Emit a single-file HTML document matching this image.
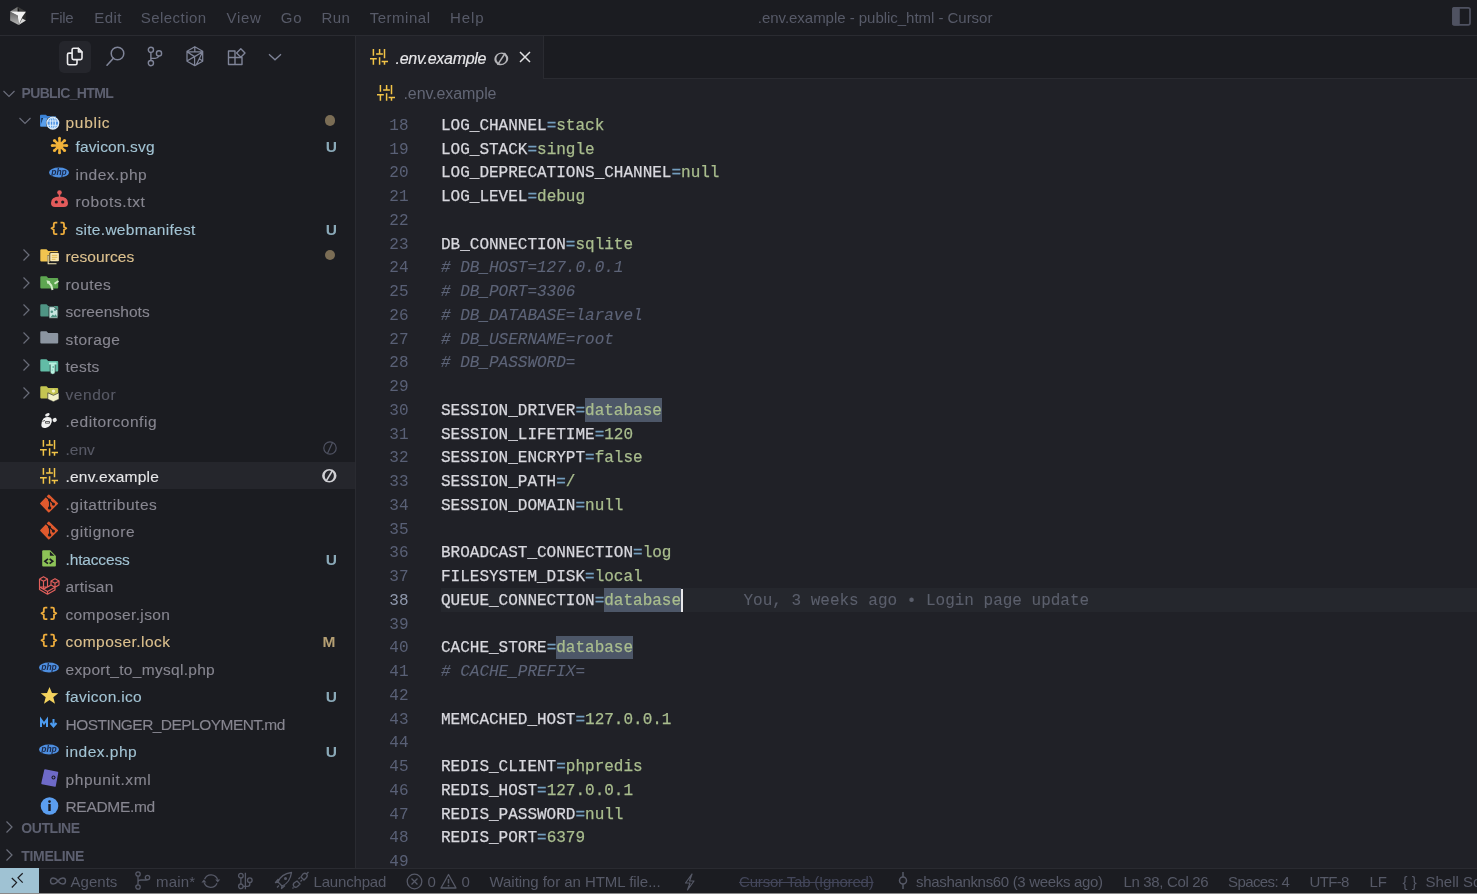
<!DOCTYPE html>
<html><head><meta charset="utf-8"><style>
html,body{margin:0;padding:0;width:1477px;height:894px;overflow:hidden;background:#1b1c21;}
.t{position:absolute;white-space:pre;line-height:normal;}
.m{position:absolute;white-space:pre;line-height:normal;font-family:"Liberation Mono",monospace;font-size:16px;color:#d8d8de;-webkit-text-stroke:0.25px currentColor;}
svg{overflow:visible}
</style></head><body>
<div style="position:absolute;left:0;top:0;width:1477px;height:894px;will-change:transform">
<div style="position:absolute;left:0px;top:0px;width:1477px;height:35px;background:#1b1c21;"></div>
<div style="position:absolute;left:0px;top:35px;width:1477px;height:1px;background:#2a2b31;"></div>
<svg style="position:absolute;left:5px;top:3px" width="26" height="26" viewBox="0 0 26 26"><path d="M5.1 8.4 L12.8 12.5 L13.7 22.1 L5.1 17.4 Z" fill="url(#lf)"/>
<defs><linearGradient id="lf" x1="0" y1="0" x2="0" y2="1"><stop offset="0" stop-color="#5e5e5e"/><stop offset="1" stop-color="#b8b8b8"/></linearGradient></defs>
<path d="M12.8 12.5 L20.9 8.6 L20.9 17.4 L13.7 22.1 Z" fill="#2c2c2c"/>
<path d="M13.7 22.1 L20.9 17.4 L17.3 15.5 Z" fill="#d8d8d8"/>
<path d="M12.8 3.8 L5.1 8.4 L12.8 12.5 Z" fill="#7c7c7c"/>
<path d="M12.8 3.8 L20.9 8.6 L12.8 12.5 Z" fill="#3a3a3a"/>
<path d="M12.8 3.8 L14.5 8.6 L12.8 9 Z" fill="#111"/>
<path d="M5.2 8.4 L20.9 8.7 L17.4 13.7 L13.7 22.1 L12.8 12.5 Z" fill="#f2f2f2"/></svg>
<div class="t" style="left:50.3px;top:9.42px;font-size:15px;color:#575a68;font-family:'Liberation Sans';font-weight:normal;font-style:normal;letter-spacing:-0.290px;">File</div>
<div class="t" style="left:94.3px;top:9.42px;font-size:15px;color:#575a68;font-family:'Liberation Sans';font-weight:normal;font-style:normal;letter-spacing:0.451px;">Edit</div>
<div class="t" style="left:140.8px;top:9.42px;font-size:15px;color:#575a68;font-family:'Liberation Sans';font-weight:normal;font-style:normal;letter-spacing:0.449px;">Selection</div>
<div class="t" style="left:226.5px;top:9.42px;font-size:15px;color:#575a68;font-family:'Liberation Sans';font-weight:normal;font-style:normal;letter-spacing:0.686px;">View</div>
<div class="t" style="left:280.8px;top:9.42px;font-size:15px;color:#575a68;font-family:'Liberation Sans';font-weight:normal;font-style:normal;letter-spacing:0.690px;">Go</div>
<div class="t" style="left:321.4px;top:9.42px;font-size:15px;color:#575a68;font-family:'Liberation Sans';font-weight:normal;font-style:normal;letter-spacing:0.441px;">Run</div>
<div class="t" style="left:369.7px;top:9.42px;font-size:15px;color:#575a68;font-family:'Liberation Sans';font-weight:normal;font-style:normal;letter-spacing:0.517px;">Terminal</div>
<div class="t" style="left:450.0px;top:9.42px;font-size:15px;color:#575a68;font-family:'Liberation Sans';font-weight:normal;font-style:normal;letter-spacing:0.883px;">Help</div>
<div class="t" style="left:757.8px;top:9.42px;font-size:15px;color:#575a68;font-family:'Liberation Sans';font-weight:normal;font-style:normal;letter-spacing:-0.031px;">.env.example - public_html - Cursor</div>
<svg style="position:absolute;left:1451px;top:6px" width="20" height="20" viewBox="0 0 20 20"><rect x="2" y="1.8" width="17" height="17" rx="1.8" fill="none" stroke="#4f5261" stroke-width="1.7"/><rect x="1.2" y="1" width="7.6" height="18.6" rx="1.6" fill="#4f5261"/></svg>
<div style="position:absolute;left:0px;top:36px;width:355px;height:832px;background:#1b1c21;"></div>
<div style="position:absolute;left:355px;top:36px;width:1px;height:832px;background:#2a2b31;"></div>
<div style="position:absolute;left:59px;top:41px;width:32px;height:32px;background:#25262c;border-radius:5px;"></div>
<svg style="position:absolute;left:62px;top:44px" width="26" height="26" viewBox="0 0 26 26"><path d="M11.6 4.3 H16.3 L20 8 V14.1 Q20 15.6 18.5 15.6 H11.6 Q10.1 15.6 10.1 14.1 V5.8 Q10.1 4.3 11.6 4.3 Z" fill="none" stroke="#ececee" stroke-width="1.6" stroke-linejoin="round"/>
<path d="M16.3 4.3 V8 H20 Z" fill="#b8b8bc" stroke="#ececee" stroke-width="1.3" stroke-linejoin="round"/>
<path d="M10.1 9.1 H7 Q5.5 9.1 5.5 10.6 V19.2 Q5.5 20.7 7 20.7 H13.5 Q15 20.7 15 19.2 V15.6" fill="none" stroke="#ececee" stroke-width="1.6" stroke-linejoin="round"/></svg>
<svg style="position:absolute;left:106px;top:47px" width="19" height="19" viewBox="0 0 19 19"><circle cx="11.5" cy="6.5" r="6.3" fill="none" stroke="#7f8498" stroke-width="1.5"/><path d="M7.4 11.2 L1 18.2" stroke="#7f8498" stroke-width="1.6" stroke-linecap="round"/></svg>
<svg style="position:absolute;left:146px;top:46px" width="17" height="21" viewBox="0 0 17 21"><circle cx="4.9" cy="3.8" r="2.6" fill="none" stroke="#7f8498" stroke-width="1.4"/><circle cx="4.9" cy="17.1" r="2.6" fill="none" stroke="#7f8498" stroke-width="1.4"/><circle cx="13" cy="7.4" r="2.6" fill="none" stroke="#7f8498" stroke-width="1.4"/><path d="M4.9 6.4 V14.5 M4.9 12.4 H9.3 Q11.8 12.4 12.9 10" fill="none" stroke="#7f8498" stroke-width="1.4"/></svg>
<svg style="position:absolute;left:183px;top:44px" width="24" height="24" viewBox="0 0 24 24"><path d="M11.8 2.7 L19.7 7.3 V17.2 L11.8 21.6 L4 17.2 V7.3 Z M4.3 7.8 H19.4 M11.8 2.7 V7.8 M4.3 8 L11.6 12.6 L19.4 8 M11.6 12.6 L4.3 16.8 M11.6 12.6 V21.5 M19.4 8.3 L13.4 20.7 M16.1 14.5 L19.6 17.1" fill="none" stroke="#7f8498" stroke-width="1.25" stroke-linejoin="round"/></svg>
<svg style="position:absolute;left:226.5px;top:47.6px" width="19" height="19" viewBox="0 0 19 19"><path d="M1.5 3 H8 V9.5 H1.5 Z M1.5 9.5 H8 V16.5 H1.5 Z M8 9.5 H15 V16.5 H8 Z" fill="none" stroke="#7f8498" stroke-width="1.4" stroke-linejoin="round"/><path d="M13.8 0.8 L18 5 L13.8 9.2 L9.6 5 Z" fill="none" stroke="#7f8498" stroke-width="1.4" stroke-linejoin="round"/></svg>
<svg style="position:absolute;left:268px;top:52px" width="14" height="9" viewBox="0 0 14 9"><path d="M1 2.3 L7 7.8 L13 2.3" fill="none" stroke="#7f8498" stroke-width="1.3"/></svg>
<svg style="position:absolute;left:1.5px;top:88.5px" width="14" height="10" viewBox="0 0 14 10"><path d="M1.5 2 L7 7.5 L12.5 2" fill="none" stroke="#6a6d7a" stroke-width="1.2"/></svg>
<div class="t" style="left:21.5px;top:84.83px;font-size:14px;color:#5d6070;font-family:'Liberation Sans';font-weight:bold;font-style:normal;letter-spacing:-0.657px;">PUBLIC_HTML</div>
<svg style="position:absolute;left:17.8px;top:116px" width="14" height="10" viewBox="0 0 14 10"><path d="M1.5 2 L7 7.5 L12.5 2" fill="none" stroke="#6a6d7a" stroke-width="1.2"/></svg>
<svg style="position:absolute;left:40px;top:113px" width="21" height="18" viewBox="0 0 21 18"><path d="M0 2.7 Q0 1.7 1 1.7 H5.8 L7.3 3 H15 Q16.2 3 16.2 4.2 V12.4 Q16.2 13.4 15.2 13.4 H1 Q0 13.4 0 12.4 Z" fill="#3b82d6"/>
<path d="M1.3 5 H3.2 L1.3 11 Z" fill="#16304f"/>
<path d="M3.3 5 H16.5 L14 13.4 H0.3 Z" fill="#5a9fea"/>
<defs><clipPath id="gc"><circle cx="12.8" cy="10.1" r="5.6"/></clipPath></defs>
<circle cx="12.8" cy="10.1" r="6.9" fill="#1b1c21"/>
<circle cx="12.8" cy="10.1" r="5.9" fill="#4a90e2" stroke="#d9ecfb" stroke-width="1.3"/>
<g clip-path="url(#gc)" stroke="#d9ecfb" stroke-width="1.1" fill="none"><ellipse cx="12.8" cy="10.1" rx="2.6" ry="6"/><path d="M6 8 H19.6 M6 12.2 H19.6 M12.8 4 V16"/></g></svg>
<div class="t" style="left:65.5px;top:113.57px;font-size:15.5px;color:#dcc08e;font-family:'Liberation Sans';font-weight:normal;font-style:normal;letter-spacing:0.720px;-webkit-text-stroke:0.12px currentColor;">public</div>
<div style="position:absolute;left:324.6px;top:115.3px;width:10.4px;height:10.4px;border-radius:50%;background:#7b6d55"></div>
<svg style="position:absolute;left:49.5px;top:135.5px" width="19" height="19" viewBox="0 0 19 19"><path d="M9.5 9.5 L16.70 9.50" stroke="#f2b33a" stroke-width="2.5"/><circle cx="16.70" cy="9.50" r="1.5" fill="#f2b33a"/><path d="M9.5 9.5 L14.59 14.59" stroke="#f2b33a" stroke-width="2.5"/><circle cx="14.59" cy="14.59" r="1.5" fill="#f2b33a"/><path d="M9.5 9.5 L9.50 16.70" stroke="#f2b33a" stroke-width="2.5"/><circle cx="9.50" cy="16.70" r="1.5" fill="#f2b33a"/><path d="M9.5 9.5 L4.41 14.59" stroke="#f2b33a" stroke-width="2.5"/><circle cx="4.41" cy="14.59" r="1.5" fill="#f2b33a"/><path d="M9.5 9.5 L2.30 9.50" stroke="#f2b33a" stroke-width="2.5"/><circle cx="2.30" cy="9.50" r="1.5" fill="#f2b33a"/><path d="M9.5 9.5 L4.41 4.41" stroke="#f2b33a" stroke-width="2.5"/><circle cx="4.41" cy="4.41" r="1.5" fill="#f2b33a"/><path d="M9.5 9.5 L9.50 2.30" stroke="#f2b33a" stroke-width="2.5"/><circle cx="9.50" cy="2.30" r="1.5" fill="#f2b33a"/><path d="M9.5 9.5 L14.59 4.41" stroke="#f2b33a" stroke-width="2.5"/><circle cx="14.59" cy="4.41" r="1.5" fill="#f2b33a"/><circle cx="9.5" cy="9.5" r="3.6" fill="#f2b33a"/></svg>
<div class="t" style="left:75.5px;top:138.07px;font-size:15.5px;color:#a2c3d3;font-family:'Liberation Sans';font-weight:normal;font-style:normal;letter-spacing:0.146px;-webkit-text-stroke:0.12px currentColor;">favicon.svg</div>
<div class="t" style="left:325.8px;top:138.27px;font-size:15.5px;color:#8aa9b8;font-family:'Liberation Sans';font-weight:bold;font-style:normal;">U</div>
<svg style="position:absolute;left:49.2px;top:166.7px" width="20" height="11" viewBox="0 0 20 11"><ellipse cx="10" cy="5.5" rx="10" ry="5" fill="#4d8ee0"/><text x="10" y="8" font-family="Liberation Sans" font-style="italic" font-weight="bold" font-size="8.5" text-anchor="middle" fill="#1b2a4a">php</text></svg>
<div class="t" style="left:75.5px;top:165.57px;font-size:15.5px;color:#878690;font-family:'Liberation Sans';font-weight:normal;font-style:normal;letter-spacing:0.485px;-webkit-text-stroke:0.12px currentColor;">index.php</div>
<svg style="position:absolute;left:50px;top:190.2px" width="19" height="18" viewBox="0 0 19 18"><circle cx="9.5" cy="2.6" r="2.3" fill="#e35b5b"/><rect x="8.8" y="3" width="1.4" height="4" fill="#e35b5b"/><path d="M1 13 Q1 6.5 9.5 6.5 Q18 6.5 18 13 Q18 17 14 17 H5 Q1 17 1 13 Z" fill="#e35b5b"/><circle cx="6.3" cy="12" r="1.6" fill="#1b1c21"/><circle cx="12.7" cy="12" r="1.6" fill="#1b1c21"/></svg>
<div class="t" style="left:75.5px;top:193.07px;font-size:15.5px;color:#878690;font-family:'Liberation Sans';font-weight:normal;font-style:normal;letter-spacing:0.628px;-webkit-text-stroke:0.12px currentColor;">robots.txt</div>
<svg style="position:absolute;left:50px;top:220.5px" width="18" height="15" viewBox="0 0 18 15"><path d="M7.3 1.6 H5.2 Q3.8 1.6 3.8 3 V5.9 L1.5 7.35 L3.8 8.8 V11.7 Q3.8 13.1 5.2 13.1 H7.3 M10.5 1.6 H12.6 Q14 1.6 14 3 V5.9 L16.3 7.35 L14 8.8 V11.7 Q14 13.1 12.6 13.1 H10.5" fill="none" stroke="#f0ae3c" stroke-width="1.8" stroke-linejoin="round"/></svg>
<div class="t" style="left:75.5px;top:220.57px;font-size:15.5px;color:#a2c3d3;font-family:'Liberation Sans';font-weight:normal;font-style:normal;letter-spacing:0.291px;-webkit-text-stroke:0.12px currentColor;">site.webmanifest</div>
<div class="t" style="left:325.8px;top:220.77px;font-size:15.5px;color:#8aa9b8;font-family:'Liberation Sans';font-weight:bold;font-style:normal;">U</div>
<svg style="position:absolute;left:20.7px;top:248.0px" width="10" height="14" viewBox="0 0 10 14"><path d="M2.5 1.5 L8 7 L2.5 12.5" fill="none" stroke="#6a6d7a" stroke-width="1.2"/></svg>
<svg style="position:absolute;left:40px;top:247.5px" width="19.5" height="17" viewBox="0 0 19.5 17"><path d="M0.3 2.3 Q0.3 1.3 1.3 1.3 H6.5 L8.2 2.9 H17.2 Q18.2 2.9 18.2 3.9 V12.5 Q18.2 13.5 17.2 13.5 H1.3 Q0.3 13.5 0.3 12.5 Z" fill="#f1c44f"/><rect x="9.5" y="4.2" width="10.1" height="9.8" rx="1" fill="#1b1c21"/><rect x="10.2" y="4.9" width="8.7" height="8.4" rx="0.8" fill="#f8e9b5"/><rect x="7.6" y="7" width="1.2" height="9.3" fill="#1b1c21"/><rect x="7.6" y="15.3" width="9.5" height="1.2" fill="#1b1c21"/><path d="M11.8 7.3 H17.3 M11.8 9.3 H17.3 M11.8 11.3 H15.5" stroke="#e0b84e" stroke-width="1"/><path d="M8.2 7.5 V15.8 H16.5" fill="none" stroke="#f8e9b5" stroke-width="1.1"/></svg>
<div class="t" style="left:65.5px;top:248.07px;font-size:15.5px;color:#dcc08e;font-family:'Liberation Sans';font-weight:normal;font-style:normal;letter-spacing:0.081px;-webkit-text-stroke:0.12px currentColor;">resources</div>
<div style="position:absolute;left:324.6px;top:249.8px;width:10.4px;height:10.4px;border-radius:50%;background:#7b6d55"></div>
<svg style="position:absolute;left:20.7px;top:275.5px" width="10" height="14" viewBox="0 0 10 14"><path d="M2.5 1.5 L8 7 L2.5 12.5" fill="none" stroke="#6a6d7a" stroke-width="1.2"/></svg>
<svg style="position:absolute;left:40px;top:275.0px" width="19.5" height="17" viewBox="0 0 19.5 17"><path d="M0.3 2.3 Q0.3 1.3 1.3 1.3 H6.5 L8.2 2.9 H17.2 Q18.2 2.9 18.2 3.9 V12.5 Q18.2 13.5 17.2 13.5 H1.3 Q0.3 13.5 0.3 12.5 Z" fill="#5ea651"/><path d="M12.5 15 L11.3 10.5 L8.3 7" fill="none" stroke="#d4ecc9" stroke-width="2"/><path d="M6.5 5.3 L10.3 6.2 L7.4 9 Z" fill="#d4ecc9"/><path d="M14.5 8.8 L18.5 6" stroke="#d4ecc9" stroke-width="2"/></svg>
<div class="t" style="left:65.5px;top:275.57px;font-size:15.5px;color:#878690;font-family:'Liberation Sans';font-weight:normal;font-style:normal;letter-spacing:0.444px;-webkit-text-stroke:0.12px currentColor;">routes</div>
<svg style="position:absolute;left:20.7px;top:303.0px" width="10" height="14" viewBox="0 0 10 14"><path d="M2.5 1.5 L8 7 L2.5 12.5" fill="none" stroke="#6a6d7a" stroke-width="1.2"/></svg>
<svg style="position:absolute;left:40px;top:302.5px" width="19.5" height="17" viewBox="0 0 19.5 17"><path d="M0.3 2.3 Q0.3 1.3 1.3 1.3 H6.5 L8.2 2.9 H17.2 Q18.2 2.9 18.2 3.9 V12.5 Q18.2 13.5 17.2 13.5 H1.3 Q0.3 13.5 0.3 12.5 Z" fill="#4f9484"/><path d="M9 3.7 H14 L17.9 7.6 V15.2 H9 Z" fill="#c8e6e0" stroke="#1b1c21" stroke-width="0.7"/><circle cx="11.8" cy="8.8" r="1.3" fill="#4f9484"/><circle cx="15" cy="6.8" r="1.1" fill="#4f9484"/><path d="M10.5 14.2 L12.8 11.5 L14.3 12.8 L15.8 11.3 L17.2 14.2 Z" fill="#4f9484"/></svg>
<div class="t" style="left:65.5px;top:303.07px;font-size:15.5px;color:#878690;font-family:'Liberation Sans';font-weight:normal;font-style:normal;letter-spacing:0.063px;-webkit-text-stroke:0.12px currentColor;">screenshots</div>
<svg style="position:absolute;left:20.7px;top:330.5px" width="10" height="14" viewBox="0 0 10 14"><path d="M2.5 1.5 L8 7 L2.5 12.5" fill="none" stroke="#6a6d7a" stroke-width="1.2"/></svg>
<svg style="position:absolute;left:40px;top:330.0px" width="19.5" height="17" viewBox="0 0 19.5 17"><path d="M0.3 2.3 Q0.3 1.3 1.3 1.3 H6.5 L8.2 2.9 H17.2 Q18.2 2.9 18.2 3.9 V12.5 Q18.2 13.5 17.2 13.5 H1.3 Q0.3 13.5 0.3 12.5 Z" fill="#8c95a1"/></svg>
<div class="t" style="left:65.5px;top:330.57px;font-size:15.5px;color:#878690;font-family:'Liberation Sans';font-weight:normal;font-style:normal;letter-spacing:0.450px;-webkit-text-stroke:0.12px currentColor;">storage</div>
<svg style="position:absolute;left:20.7px;top:358.0px" width="10" height="14" viewBox="0 0 10 14"><path d="M2.5 1.5 L8 7 L2.5 12.5" fill="none" stroke="#6a6d7a" stroke-width="1.2"/></svg>
<svg style="position:absolute;left:40px;top:357.5px" width="19.5" height="17" viewBox="0 0 19.5 17"><path d="M0.3 2.3 Q0.3 1.3 1.3 1.3 H6.5 L8.2 2.9 H17.2 Q18.2 2.9 18.2 3.9 V12.5 Q18.2 13.5 17.2 13.5 H1.3 Q0.3 13.5 0.3 12.5 Z" fill="#62bca6"/><path d="M10.2 5.6 H15.2 V14 Q15.2 16.3 12.7 16.3 Q10.2 16.3 10.2 14 Z" fill="#b8f2e0" stroke="#1b1c21" stroke-width="0.6"/><rect x="9" y="4.6" width="7.6" height="2" rx="0.6" fill="#b8f2e0"/><circle cx="13.2" cy="9" r="0.9" fill="#62bca6"/><circle cx="12.3" cy="12" r="0.6" fill="#62bca6"/></svg>
<div class="t" style="left:65.5px;top:358.07px;font-size:15.5px;color:#878690;font-family:'Liberation Sans';font-weight:normal;font-style:normal;letter-spacing:0.267px;-webkit-text-stroke:0.12px currentColor;">tests</div>
<svg style="position:absolute;left:20.7px;top:385.5px" width="10" height="14" viewBox="0 0 10 14"><path d="M2.5 1.5 L8 7 L2.5 12.5" fill="none" stroke="#6a6d7a" stroke-width="1.2"/></svg>
<svg style="position:absolute;left:40px;top:385.0px" width="19.5" height="17" viewBox="0 0 19.5 17"><path d="M0.3 2.3 Q0.3 1.3 1.3 1.3 H6.5 L8.2 2.9 H17.2 Q18.2 2.9 18.2 3.9 V12.5 Q18.2 13.5 17.2 13.5 H1.3 Q0.3 13.5 0.3 12.5 Z" fill="#c4c552"/><path d="M7.8 7.8 L13.4 10.3 L19 7.8 V14.2 L13.4 16.7 L7.8 14.2 Z" fill="#f3f2c8" stroke="#1b1c21" stroke-width="0.6"/><circle cx="13.4" cy="6.1" r="1.7" fill="#f3f2c8"/></svg>
<div class="t" style="left:65.5px;top:385.57px;font-size:15.5px;color:#585a66;font-family:'Liberation Sans';font-weight:normal;font-style:normal;letter-spacing:0.561px;-webkit-text-stroke:0.12px currentColor;">vendor</div>
<svg style="position:absolute;left:40px;top:411.5px" width="19" height="18" viewBox="0 0 19 18"><ellipse cx="7.4" cy="2.8" rx="2.4" ry="1.5" transform="rotate(-25 7.4 2.8)" fill="#ececec"/><path d="M3.5 6.5 Q7 4.3 10.5 5.5 Q12.5 7 11.5 10.5 Q10 15 5.5 16 Q1.5 16.5 1.3 13 Q1.2 9 3.5 6.5 Z" fill="#f2f2f2"/><ellipse cx="14.7" cy="8" rx="2.2" ry="2" transform="rotate(-30 14.7 8)" fill="#e8e8e8"/><path d="M2.5 9.5 L5 8.3 M5.5 9.5 H9.5 V11.2 H5.5 Z" fill="none" stroke="#3a3a3a" stroke-width="0.8"/></svg>
<div class="t" style="left:65.5px;top:413.07px;font-size:15.5px;color:#878690;font-family:'Liberation Sans';font-weight:normal;font-style:normal;letter-spacing:0.555px;-webkit-text-stroke:0.12px currentColor;">.editorconfig</div>
<svg style="position:absolute;left:40px;top:440.0px" width="19" height="16" viewBox="0 0 19 16"><g stroke="#f2c447" stroke-width="1.5" fill="none"><path d="M3.4 0 V6.8 M0 9.8 H6.8 M3.4 9.8 V15.8 M9.6 0 V4.9 M6.1 4.9 H12.9 M9.6 8.2 V15.8 M14.5 0 V9.2 M11.6 12.4 H18 M14.5 12.4 V15.8"/></g></svg>
<div class="t" style="left:65.5px;top:440.57px;font-size:15.5px;color:#585a66;font-family:'Liberation Sans';font-weight:normal;font-style:normal;letter-spacing:0.001px;-webkit-text-stroke:0.12px currentColor;">.env</div>
<svg style="position:absolute;left:322.5px;top:441.0px" width="14" height="14" viewBox="0 0 14 14"><ellipse cx="7" cy="7" rx="6.2" ry="6.2" fill="none" stroke="#4f5262" stroke-width="1.2"/><path d="M9.5 1.5 L4.5 12.5" stroke="#4f5262" stroke-width="1.2"/></svg>
<div style="position:absolute;left:0px;top:462.0px;width:355px;height:27px;background:#25262c;"></div>
<svg style="position:absolute;left:40px;top:467.5px" width="19" height="16" viewBox="0 0 19 16"><g stroke="#f2c447" stroke-width="1.5" fill="none"><path d="M3.4 0 V6.8 M0 9.8 H6.8 M3.4 9.8 V15.8 M9.6 0 V4.9 M6.1 4.9 H12.9 M9.6 8.2 V15.8 M14.5 0 V9.2 M11.6 12.4 H18 M14.5 12.4 V15.8"/></g></svg>
<div class="t" style="left:65.5px;top:468.07px;font-size:15.5px;color:#e6e6e8;font-family:'Liberation Sans';font-weight:normal;font-style:normal;letter-spacing:0.205px;-webkit-text-stroke:0.12px currentColor;">.env.example</div>
<svg style="position:absolute;left:322px;top:469.3px" width="15" height="14" viewBox="0 0 15 14"><path fill-rule="evenodd" fill="#cfcfd3" d="M0.09999999999999964 6.8 A7.2 6.7 0 1 0 14.5 6.8 A7.2 6.7 0 1 0 0.09999999999999964 6.8 Z M2.7 6.8 A4.6 5.3 0 1 0 11.899999999999999 6.8 A4.6 5.3 0 1 0 2.7 6.8 Z"/><path d="M10.8 1 L3.8 12.6" stroke="#cfcfd3" stroke-width="1.6"/></svg>
<svg style="position:absolute;left:40px;top:493.5px" width="19" height="19" viewBox="0 0 19 19"><path d="M8.8 1.3 L17.3 9.5 L8.8 17.7 L0.9 9.5 Z" fill="#e05a2e" stroke="#e05a2e" stroke-width="1.6" stroke-linejoin="round"/><path d="M5.6 2.2 L9.5 6 L9.6 13.8 M9.5 6 L13.4 10" stroke="#1b1c21" stroke-width="1.2" fill="none"/><circle cx="9.5" cy="6" r="1.5" fill="#1b1c21"/><circle cx="9.6" cy="13.9" r="1.7" fill="#1b1c21"/><circle cx="13.4" cy="10.1" r="1.6" fill="#1b1c21"/></svg>
<div class="t" style="left:65.5px;top:495.57px;font-size:15.5px;color:#878690;font-family:'Liberation Sans';font-weight:normal;font-style:normal;letter-spacing:0.528px;-webkit-text-stroke:0.12px currentColor;">.gitattributes</div>
<svg style="position:absolute;left:40px;top:521.0px" width="19" height="19" viewBox="0 0 19 19"><path d="M8.8 1.3 L17.3 9.5 L8.8 17.7 L0.9 9.5 Z" fill="#e05a2e" stroke="#e05a2e" stroke-width="1.6" stroke-linejoin="round"/><path d="M5.6 2.2 L9.5 6 L9.6 13.8 M9.5 6 L13.4 10" stroke="#1b1c21" stroke-width="1.2" fill="none"/><circle cx="9.5" cy="6" r="1.5" fill="#1b1c21"/><circle cx="9.6" cy="13.9" r="1.7" fill="#1b1c21"/><circle cx="13.4" cy="10.1" r="1.6" fill="#1b1c21"/></svg>
<div class="t" style="left:65.5px;top:523.07px;font-size:15.5px;color:#878690;font-family:'Liberation Sans';font-weight:normal;font-style:normal;letter-spacing:0.604px;-webkit-text-stroke:0.12px currentColor;">.gitignore</div>
<svg style="position:absolute;left:40px;top:548.5px" width="19" height="19" viewBox="0 0 19 19"><path d="M3.2 1.3 H10.2 L15.9 7 V16.6 Q15.9 17.6 14.9 17.6 H3.2 Q2.2 17.6 2.2 16.6 V2.3 Q2.2 1.3 3.2 1.3 Z" fill="#8dc357"/><path d="M9.9 2.6 V6.7 H14.4 Z" fill="#1b1c21"/><path d="M8 9.9 L4.9 12.3 L8 14.7 M9.6 9.9 L12.7 12.3 L9.6 14.7" fill="none" stroke="#1b1c21" stroke-width="1.7"/></svg>
<div class="t" style="left:65.5px;top:550.57px;font-size:15.5px;color:#a2c3d3;font-family:'Liberation Sans';font-weight:normal;font-style:normal;letter-spacing:-0.147px;-webkit-text-stroke:0.12px currentColor;">.htaccess</div>
<div class="t" style="left:325.8px;top:550.77px;font-size:15.5px;color:#8aa9b8;font-family:'Liberation Sans';font-weight:bold;font-style:normal;">U</div>
<svg style="position:absolute;left:38px;top:576.0px" width="22" height="19" viewBox="0 0 22 19"><g fill="none" stroke="#e2605c" stroke-width="1.15" stroke-linejoin="round"><path d="M1.5 3 V11 M1.5 3 L5.5 0.7 L9.5 3 V11 L13 9 V5 L17 2.7 L21 5 V9 L17 11.3 L13 9 M9.5 11 L5.5 13.3 L1.5 11 Z M1.5 3 L5.5 5.3 L9.5 3 M5.5 5.3 V13.3 M13 5 L17 7.3 L21 5 M17 7.3 V11.3 M5.5 13.3 L9.5 15.6 L17 11.3 M9.5 15.6 V18.2 L17 13.9 V11.3 M1.5 11 V13.6 L9.5 18.2"/></g></svg>
<div class="t" style="left:65.5px;top:578.07px;font-size:15.5px;color:#878690;font-family:'Liberation Sans';font-weight:normal;font-style:normal;letter-spacing:0.213px;-webkit-text-stroke:0.12px currentColor;">artisan</div>
<svg style="position:absolute;left:40px;top:605.5px" width="18" height="15" viewBox="0 0 18 15"><path d="M7.3 1.6 H5.2 Q3.8 1.6 3.8 3 V5.9 L1.5 7.35 L3.8 8.8 V11.7 Q3.8 13.1 5.2 13.1 H7.3 M10.5 1.6 H12.6 Q14 1.6 14 3 V5.9 L16.3 7.35 L14 8.8 V11.7 Q14 13.1 12.6 13.1 H10.5" fill="none" stroke="#f0ae3c" stroke-width="1.8" stroke-linejoin="round"/></svg>
<div class="t" style="left:65.5px;top:605.57px;font-size:15.5px;color:#878690;font-family:'Liberation Sans';font-weight:normal;font-style:normal;letter-spacing:0.372px;-webkit-text-stroke:0.12px currentColor;">composer.json</div>
<svg style="position:absolute;left:40px;top:633.0px" width="18" height="15" viewBox="0 0 18 15"><path d="M7.3 1.6 H5.2 Q3.8 1.6 3.8 3 V5.9 L1.5 7.35 L3.8 8.8 V11.7 Q3.8 13.1 5.2 13.1 H7.3 M10.5 1.6 H12.6 Q14 1.6 14 3 V5.9 L16.3 7.35 L14 8.8 V11.7 Q14 13.1 12.6 13.1 H10.5" fill="none" stroke="#f0ae3c" stroke-width="1.8" stroke-linejoin="round"/></svg>
<div class="t" style="left:65.5px;top:633.07px;font-size:15.5px;color:#dcc08e;font-family:'Liberation Sans';font-weight:normal;font-style:normal;letter-spacing:0.444px;-webkit-text-stroke:0.12px currentColor;">composer.lock</div>
<div class="t" style="left:322.5px;top:633.27px;font-size:15.5px;color:#b59f73;font-family:'Liberation Sans';font-weight:bold;font-style:normal;">M</div>
<svg style="position:absolute;left:39.2px;top:661.7px" width="20" height="11" viewBox="0 0 20 11"><ellipse cx="10" cy="5.5" rx="10" ry="5" fill="#4d8ee0"/><text x="10" y="8" font-family="Liberation Sans" font-style="italic" font-weight="bold" font-size="8.5" text-anchor="middle" fill="#1b2a4a">php</text></svg>
<div class="t" style="left:65.5px;top:660.57px;font-size:15.5px;color:#878690;font-family:'Liberation Sans';font-weight:normal;font-style:normal;letter-spacing:0.295px;-webkit-text-stroke:0.12px currentColor;">export_to_mysql.php</div>
<svg style="position:absolute;left:40px;top:686.0px" width="19" height="19" viewBox="0 0 19 19"><path d="M9.5 1 L12 7 L18.3 7.3 L13.3 11.2 L15 17.7 L9.5 14 L4 17.7 L5.7 11.2 L0.7 7.3 L7 7 Z" fill="#f4d35e"/></svg>
<div class="t" style="left:65.5px;top:688.07px;font-size:15.5px;color:#a2c3d3;font-family:'Liberation Sans';font-weight:normal;font-style:normal;letter-spacing:0.287px;-webkit-text-stroke:0.12px currentColor;">favicon.ico</div>
<div class="t" style="left:325.8px;top:688.27px;font-size:15.5px;color:#8aa9b8;font-family:'Liberation Sans';font-weight:bold;font-style:normal;">U</div>
<svg style="position:absolute;left:40px;top:718.0px" width="19" height="10" viewBox="0 0 19 10"><path d="M1 9 V1.5 L4 5.5 L7 1.5 V9" fill="none" stroke="#4d9cf0" stroke-width="2"/><path d="M13.5 1 V7.5 M10.5 5 L13.5 8.5 L16.5 5" fill="none" stroke="#4d9cf0" stroke-width="2"/></svg>
<div class="t" style="left:65.5px;top:715.57px;font-size:15.5px;color:#878690;font-family:'Liberation Sans';font-weight:normal;font-style:normal;letter-spacing:-0.540px;-webkit-text-stroke:0.12px currentColor;">HOSTINGER_DEPLOYMENT.md</div>
<svg style="position:absolute;left:39.2px;top:744.2px" width="20" height="11" viewBox="0 0 20 11"><ellipse cx="10" cy="5.5" rx="10" ry="5" fill="#4d8ee0"/><text x="10" y="8" font-family="Liberation Sans" font-style="italic" font-weight="bold" font-size="8.5" text-anchor="middle" fill="#1b2a4a">php</text></svg>
<div class="t" style="left:65.5px;top:743.07px;font-size:15.5px;color:#a2c3d3;font-family:'Liberation Sans';font-weight:normal;font-style:normal;letter-spacing:0.485px;-webkit-text-stroke:0.12px currentColor;">index.php</div>
<div class="t" style="left:325.8px;top:743.27px;font-size:15.5px;color:#8aa9b8;font-family:'Liberation Sans';font-weight:bold;font-style:normal;">U</div>
<svg style="position:absolute;left:40px;top:769.0px" width="19" height="18" viewBox="0 0 19 18"><path d="M5 1 L17.5 3.5 L15 17 L2 14.5 Z" fill="#6e6ac8" stroke="#6e6ac8" stroke-width="1.5" stroke-linejoin="round"/><circle cx="13.5" cy="8.5" r="2" fill="#1b1c21"/><circle cx="13.5" cy="8.5" r="1" fill="#6e6ac8"/></svg>
<div class="t" style="left:65.5px;top:770.57px;font-size:15.5px;color:#878690;font-family:'Liberation Sans';font-weight:normal;font-style:normal;letter-spacing:0.584px;-webkit-text-stroke:0.12px currentColor;">phpunit.xml</div>
<svg style="position:absolute;left:40px;top:796.5px" width="19" height="18" viewBox="0 0 19 18"><circle cx="9.5" cy="9" r="8.8" fill="#5b9ef0"/><rect x="8.3" y="7" width="2.4" height="7" fill="#1b1c21"/><circle cx="9.5" cy="4.6" r="1.3" fill="#1b1c21"/></svg>
<div class="t" style="left:65.5px;top:798.07px;font-size:15.5px;color:#878690;font-family:'Liberation Sans';font-weight:normal;font-style:normal;letter-spacing:-0.319px;-webkit-text-stroke:0.12px currentColor;">README.md</div>
<svg style="position:absolute;left:4px;top:820px" width="10" height="14" viewBox="0 0 10 14"><path d="M2.5 1.5 L8 7 L2.5 12.5" fill="none" stroke="#6a6d7a" stroke-width="1.2"/></svg>
<div class="t" style="left:21.3px;top:819.63px;font-size:14px;color:#5d6070;font-family:'Liberation Sans';font-weight:bold;font-style:normal;letter-spacing:-0.440px;">OUTLINE</div>
<svg style="position:absolute;left:4px;top:848px" width="10" height="14" viewBox="0 0 10 14"><path d="M2.5 1.5 L8 7 L2.5 12.5" fill="none" stroke="#6a6d7a" stroke-width="1.2"/></svg>
<div class="t" style="left:21.3px;top:847.63px;font-size:14px;color:#5d6070;font-family:'Liberation Sans';font-weight:bold;font-style:normal;letter-spacing:-0.319px;">TIMELINE</div>
<div style="position:absolute;left:356px;top:36px;width:1121px;height:832px;background:#202127;"></div>
<div style="position:absolute;left:356px;top:36px;width:1121px;height:42px;background:#1b1c21;"></div>
<div style="position:absolute;left:543px;top:36px;width:1px;height:43px;background:#2a2b31;"></div>
<div style="position:absolute;left:544px;top:78px;width:933px;height:1px;background:#2a2b31;"></div>
<div style="position:absolute;left:356px;top:36px;width:187px;height:42px;background:#202127;"></div>
<svg style="position:absolute;left:370px;top:49px" width="19" height="16" viewBox="0 0 19 16"><g stroke="#f2c447" stroke-width="1.5" fill="none"><path d="M3.4 0 V6.8 M0 9.8 H6.8 M3.4 9.8 V15.8 M9.6 0 V4.9 M6.1 4.9 H12.9 M9.6 8.2 V15.8 M14.5 0 V9.2 M11.6 12.4 H18 M14.5 12.4 V15.8"/></g></svg>
<div class="t" style="left:395.5px;top:49.52px;font-size:16px;color:#e6e6e8;font-family:'Liberation Sans';font-weight:normal;font-style:italic;letter-spacing:-0.271px;-webkit-text-stroke:0.15px currentColor;">.env.example</div>
<svg style="position:absolute;left:494px;top:51.5px" width="15" height="15" viewBox="0 0 15 15"><g transform="rotate(-20 7.3 6.8)"><path fill-rule="evenodd" fill="#b4b4b8" d="M0.2999999999999998 6.8 A7.0 6.3 0 1 0 14.3 6.8 A7.0 6.3 0 1 0 0.2999999999999998 6.8 Z M2.5 6.8 A4.8 5.0 0 1 0 12.1 6.8 A4.8 5.0 0 1 0 2.5 6.8 Z"/></g><path d="M11.3 1 L3.5 12.8" stroke="#b4b4b8" stroke-width="1.5"/></svg>
<svg style="position:absolute;left:518px;top:50px" width="14" height="14" viewBox="0 0 14 14"><path d="M2 2 L12 12 M12 2 L2 12" stroke="#e0e0e2" stroke-width="1.5"/></svg>
<svg style="position:absolute;left:377px;top:85px" width="19" height="16" viewBox="0 0 19 16"><g stroke="#f2c447" stroke-width="1.5" fill="none"><path d="M3.4 0 V6.8 M0 9.8 H6.8 M3.4 9.8 V15.8 M9.6 0 V4.9 M6.1 4.9 H12.9 M9.6 8.2 V15.8 M14.5 0 V9.2 M11.6 12.4 H18 M14.5 12.4 V15.8"/></g></svg>
<div class="t" style="left:403.5px;top:85.02px;font-size:16px;color:#626675;font-family:'Liberation Sans';font-weight:normal;font-style:normal;letter-spacing:-0.089px;">.env.example</div>
<div style="position:absolute;left:356px;top:78px;width:1121px;height:790px;overflow:hidden">
<div class="m" style="left:33.30px;top:38.97px;color:#596076;-webkit-text-stroke:0">18</div>
<div class="m" style="left:85px;top:38.97px"><span style="color:#d8d8de;">LOG_CHANNEL</span><span style="color:#739dbd;">=</span><span style="color:#a9bd8e;">stack</span></div>
<div class="m" style="left:33.30px;top:62.72px;color:#596076;-webkit-text-stroke:0">19</div>
<div class="m" style="left:85px;top:62.72px"><span style="color:#d8d8de;">LOG_STACK</span><span style="color:#739dbd;">=</span><span style="color:#a9bd8e;">single</span></div>
<div class="m" style="left:33.30px;top:86.47px;color:#596076;-webkit-text-stroke:0">20</div>
<div class="m" style="left:85px;top:86.47px"><span style="color:#d8d8de;">LOG_DEPRECATIONS_CHANNEL</span><span style="color:#739dbd;">=</span><span style="color:#a9bd8e;">null</span></div>
<div class="m" style="left:33.30px;top:110.22px;color:#596076;-webkit-text-stroke:0">21</div>
<div class="m" style="left:85px;top:110.22px"><span style="color:#d8d8de;">LOG_LEVEL</span><span style="color:#739dbd;">=</span><span style="color:#a9bd8e;">debug</span></div>
<div class="m" style="left:33.30px;top:133.97px;color:#596076;-webkit-text-stroke:0">22</div>
<div class="m" style="left:33.30px;top:157.72px;color:#596076;-webkit-text-stroke:0">23</div>
<div class="m" style="left:85px;top:157.72px"><span style="color:#d8d8de;">DB_CONNECTION</span><span style="color:#739dbd;">=</span><span style="color:#a9bd8e;">sqlite</span></div>
<div class="m" style="left:33.30px;top:181.47px;color:#596076;-webkit-text-stroke:0">24</div>
<div class="m" style="left:85px;top:181.47px"><span style="color:#5d6478;font-style:italic;-webkit-text-stroke:0.1px currentColor;"># DB_HOST=127.0.0.1</span></div>
<div class="m" style="left:33.30px;top:205.22px;color:#596076;-webkit-text-stroke:0">25</div>
<div class="m" style="left:85px;top:205.22px"><span style="color:#5d6478;font-style:italic;-webkit-text-stroke:0.1px currentColor;"># DB_PORT=3306</span></div>
<div class="m" style="left:33.30px;top:228.97px;color:#596076;-webkit-text-stroke:0">26</div>
<div class="m" style="left:85px;top:228.97px"><span style="color:#5d6478;font-style:italic;-webkit-text-stroke:0.1px currentColor;"># DB_DATABASE=laravel</span></div>
<div class="m" style="left:33.30px;top:252.72px;color:#596076;-webkit-text-stroke:0">27</div>
<div class="m" style="left:85px;top:252.72px"><span style="color:#5d6478;font-style:italic;-webkit-text-stroke:0.1px currentColor;"># DB_USERNAME=root</span></div>
<div class="m" style="left:33.30px;top:276.47px;color:#596076;-webkit-text-stroke:0">28</div>
<div class="m" style="left:85px;top:276.47px"><span style="color:#5d6478;font-style:italic;-webkit-text-stroke:0.1px currentColor;"># DB_PASSWORD=</span></div>
<div class="m" style="left:33.30px;top:300.22px;color:#596076;-webkit-text-stroke:0">29</div>
<div style="position:absolute;left:229.00px;top:320.00px;width:76.80px;height:23.75px;background:#4d5768"></div>
<div class="m" style="left:33.30px;top:323.97px;color:#596076;-webkit-text-stroke:0">30</div>
<div class="m" style="left:85px;top:323.97px"><span style="color:#d8d8de;">SESSION_DRIVER</span><span style="color:#739dbd;">=</span><span style="color:#a9bd8e;">database</span></div>
<div class="m" style="left:33.30px;top:347.72px;color:#596076;-webkit-text-stroke:0">31</div>
<div class="m" style="left:85px;top:347.72px"><span style="color:#d8d8de;">SESSION_LIFETIME</span><span style="color:#739dbd;">=</span><span style="color:#a9bd8e;">120</span></div>
<div class="m" style="left:33.30px;top:371.47px;color:#596076;-webkit-text-stroke:0">32</div>
<div class="m" style="left:85px;top:371.47px"><span style="color:#d8d8de;">SESSION_ENCRYPT</span><span style="color:#739dbd;">=</span><span style="color:#a9bd8e;">false</span></div>
<div class="m" style="left:33.30px;top:395.22px;color:#596076;-webkit-text-stroke:0">33</div>
<div class="m" style="left:85px;top:395.22px"><span style="color:#d8d8de;">SESSION_PATH</span><span style="color:#739dbd;">=</span><span style="color:#a9bd8e;">/</span></div>
<div class="m" style="left:33.30px;top:418.97px;color:#596076;-webkit-text-stroke:0">34</div>
<div class="m" style="left:85px;top:418.97px"><span style="color:#d8d8de;">SESSION_DOMAIN</span><span style="color:#739dbd;">=</span><span style="color:#a9bd8e;">null</span></div>
<div class="m" style="left:33.30px;top:442.72px;color:#596076;-webkit-text-stroke:0">35</div>
<div class="m" style="left:33.30px;top:466.47px;color:#596076;-webkit-text-stroke:0">36</div>
<div class="m" style="left:85px;top:466.47px"><span style="color:#d8d8de;">BROADCAST_CONNECTION</span><span style="color:#739dbd;">=</span><span style="color:#a9bd8e;">log</span></div>
<div class="m" style="left:33.30px;top:490.22px;color:#596076;-webkit-text-stroke:0">37</div>
<div class="m" style="left:85px;top:490.22px"><span style="color:#d8d8de;">FILESYSTEM_DISK</span><span style="color:#739dbd;">=</span><span style="color:#a9bd8e;">local</span></div>
<div style="position:absolute;left:85px;top:510.40px;width:1036px;height:23.75px;background:#25272d"></div>
<div style="position:absolute;left:248.20px;top:510.00px;width:76.80px;height:23.75px;background:#4d5768"></div>
<div class="m" style="left:33.30px;top:513.97px;color:#8e97ab;-webkit-text-stroke:0">38</div>
<div class="m" style="left:85px;top:513.97px"><span style="color:#d8d8de;">QUEUE_CONNECTION</span><span style="color:#739dbd;">=</span><span style="color:#a9bd8e;">database</span></div>
<div style="position:absolute;left:325.00px;top:510.90px;width:2px;height:22.75px;background:#e8e8ea"></div>
<div class="m" style="left:387.5px;top:513.97px;color:#5b5f6c;-webkit-text-stroke:0.1px currentColor">You, 3 weeks ago • Login page update</div>
<div class="m" style="left:33.30px;top:537.72px;color:#596076;-webkit-text-stroke:0">39</div>
<div style="position:absolute;left:200.20px;top:557.50px;width:76.80px;height:23.75px;background:#4d5768"></div>
<div class="m" style="left:33.30px;top:561.47px;color:#596076;-webkit-text-stroke:0">40</div>
<div class="m" style="left:85px;top:561.47px"><span style="color:#d8d8de;">CACHE_STORE</span><span style="color:#739dbd;">=</span><span style="color:#a9bd8e;">database</span></div>
<div class="m" style="left:33.30px;top:585.22px;color:#596076;-webkit-text-stroke:0">41</div>
<div class="m" style="left:85px;top:585.22px"><span style="color:#5d6478;font-style:italic;-webkit-text-stroke:0.1px currentColor;"># CACHE_PREFIX=</span></div>
<div class="m" style="left:33.30px;top:608.97px;color:#596076;-webkit-text-stroke:0">42</div>
<div class="m" style="left:33.30px;top:632.72px;color:#596076;-webkit-text-stroke:0">43</div>
<div class="m" style="left:85px;top:632.72px"><span style="color:#d8d8de;">MEMCACHED_HOST</span><span style="color:#739dbd;">=</span><span style="color:#a9bd8e;">127.0.0.1</span></div>
<div class="m" style="left:33.30px;top:656.47px;color:#596076;-webkit-text-stroke:0">44</div>
<div class="m" style="left:33.30px;top:680.22px;color:#596076;-webkit-text-stroke:0">45</div>
<div class="m" style="left:85px;top:680.22px"><span style="color:#d8d8de;">REDIS_CLIENT</span><span style="color:#739dbd;">=</span><span style="color:#a9bd8e;">phpredis</span></div>
<div class="m" style="left:33.30px;top:703.97px;color:#596076;-webkit-text-stroke:0">46</div>
<div class="m" style="left:85px;top:703.97px"><span style="color:#d8d8de;">REDIS_HOST</span><span style="color:#739dbd;">=</span><span style="color:#a9bd8e;">127.0.0.1</span></div>
<div class="m" style="left:33.30px;top:727.72px;color:#596076;-webkit-text-stroke:0">47</div>
<div class="m" style="left:85px;top:727.72px"><span style="color:#d8d8de;">REDIS_PASSWORD</span><span style="color:#739dbd;">=</span><span style="color:#a9bd8e;">null</span></div>
<div class="m" style="left:33.30px;top:751.47px;color:#596076;-webkit-text-stroke:0">48</div>
<div class="m" style="left:85px;top:751.47px"><span style="color:#d8d8de;">REDIS_PORT</span><span style="color:#739dbd;">=</span><span style="color:#a9bd8e;">6379</span></div>
<div class="m" style="left:33.30px;top:775.22px;color:#596076;-webkit-text-stroke:0">49</div>
</div>
<div style="position:absolute;left:0px;top:868px;width:1477px;height:26px;background:#1b1c21;"></div>
<div style="position:absolute;left:0px;top:868px;width:1477px;height:1px;background:#2a2b31;"></div>
<div style="position:absolute;left:0px;top:893px;width:1477px;height:1px;background:#8a8a8a;"></div>
<div style="position:absolute;left:0px;top:868px;width:39px;height:25px;background:#9fc2d3;"></div>
<svg style="position:absolute;left:0px;top:860px" width="39" height="34" viewBox="0 0 39 34"><path d="M11.8 878 L16.6 882.6 L11.8 887.5 M22.7 873.3 L18 877.8 L22.7 882.7" transform="translate(0,-860)" fill="none" stroke="#1b1c21" stroke-width="1.2"/></svg>
<svg style="position:absolute;left:49px;top:875px" width="18" height="12" viewBox="0 0 18 12"><path d="M9 6 C6 2 1.5 2 1.5 6 C1.5 10 6 10 9 6 C12 2 16.5 2 16.5 6 C16.5 10 12 10 9 6 Z" fill="none" stroke="#565967" stroke-width="1.4"/></svg>
<div class="t" style="left:70.6px;top:873.42px;font-size:15px;color:#565967;font-family:'Liberation Sans';font-weight:normal;font-style:normal;letter-spacing:0.000px;">Agents</div>
<svg style="position:absolute;left:135px;top:871px" width="16" height="19" viewBox="0 0 16 19"><circle cx="3" cy="3" r="2.2" fill="none" stroke="#565967" stroke-width="1.3"/><circle cx="3" cy="16" r="2.2" fill="none" stroke="#565967" stroke-width="1.3"/><circle cx="12.5" cy="6.5" r="2.2" fill="none" stroke="#565967" stroke-width="1.3"/><path d="M3 5.2 V13.8 M3 11 Q3 9 6 9 H9 Q12.5 9 12.5 8.7" fill="none" stroke="#565967" stroke-width="1.3"/></svg>
<div class="t" style="left:156px;top:873.42px;font-size:15px;color:#565967;font-family:'Liberation Sans';font-weight:normal;font-style:normal;letter-spacing:0.163px;">main*</div>
<svg style="position:absolute;left:202px;top:872px" width="19" height="18" viewBox="0 0 19 18"><path d="M2.6 7.2 A6.9 6.9 0 0 1 15.6 7.6 M15 11.2 A6.9 6.9 0 0 1 2.2 10.8" fill="none" stroke="#565967" stroke-width="1.3"/><path d="M13.2 7.6 H18.2 L15.7 10.6 Z M-0.6 10.4 H4.4 L1.9 7.4 Z" fill="#565967"/></svg>
<svg style="position:absolute;left:236px;top:871px" width="17" height="19" viewBox="0 0 17 19"><circle cx="4.9" cy="4.7" r="2.3" fill="none" stroke="#565967" stroke-width="1.3"/><circle cx="4.9" cy="15.3" r="2.3" fill="none" stroke="#565967" stroke-width="1.3"/><circle cx="13.8" cy="9.2" r="2.3" fill="none" stroke="#565967" stroke-width="1.3"/><path d="M4.9 7 V13 M9.4 1.8 V18.2 M13.8 11.5 V13.3 Q13.8 15.3 11.8 15.3 H7.2" fill="none" stroke="#565967" stroke-width="1.3"/></svg>
<svg style="position:absolute;left:274px;top:871px" width="19" height="19" viewBox="0 0 19 19"><path d="M6 13 L4 11 Q7 3 17.5 1.5 Q16 12 8 15 Z M4 11 L1.5 11.5 L4.5 8 M8 15 L7.5 17.5 L11 14.5 M3 16.5 L5 14.5" fill="none" stroke="#565967" stroke-width="1.3" stroke-linejoin="round"/><circle cx="11.5" cy="7.5" r="1.5" fill="#565967"/></svg>
<svg style="position:absolute;left:292px;top:871px" width="17" height="19" viewBox="0 0 17 19"><path d="M5 10 L8 13 L5.5 15.5 Q3.5 17 2 15.5 Q0.5 14 2 12 Z M1.5 16.5 L0.5 17.5 M9 6 L12 9 L14.5 6.5 Q16 4.5 14.5 3 Q13 1.5 11 3 Z M15 2.5 L16.5 1 M6.5 8 L8 6.5 M8.5 10.5 L10 9" fill="none" stroke="#565967" stroke-width="1.3"/></svg>
<div class="t" style="left:313.5px;top:873.42px;font-size:15px;color:#565967;font-family:'Liberation Sans';font-weight:normal;font-style:normal;letter-spacing:-0.180px;">Launchpad</div>
<svg style="position:absolute;left:406px;top:873px" width="17" height="17" viewBox="0 0 17 17"><circle cx="8.5" cy="8.5" r="7.3" fill="none" stroke="#565967" stroke-width="1.3"/><path d="M5.5 5.5 L11.5 11.5 M11.5 5.5 L5.5 11.5" stroke="#565967" stroke-width="1.3"/></svg>
<div class="t" style="left:427.5px;top:873.42px;font-size:15px;color:#565967;font-family:'Liberation Sans';font-weight:normal;font-style:normal;">0</div>
<svg style="position:absolute;left:440px;top:873px" width="17" height="16" viewBox="0 0 17 16"><path d="M8.5 1.5 L16 15 H1 Z" fill="none" stroke="#565967" stroke-width="1.3" stroke-linejoin="round"/><path d="M8.5 6 V10.5" stroke="#565967" stroke-width="1.5"/><circle cx="8.5" cy="12.7" r="0.9" fill="#565967"/></svg>
<div class="t" style="left:461.5px;top:873.42px;font-size:15px;color:#565967;font-family:'Liberation Sans';font-weight:normal;font-style:normal;">0</div>
<div class="t" style="left:489.5px;top:873.42px;font-size:15px;color:#565967;font-family:'Liberation Sans';font-weight:normal;font-style:normal;letter-spacing:-0.047px;">Waiting for an HTML file...</div>
<svg style="position:absolute;left:683px;top:873px" width="13" height="18" viewBox="0 0 13 18"><path d="M9 1 L2.5 10 H7 L4.5 17 L11 8 H6.5 Z" fill="none" stroke="#565967" stroke-width="1.2" stroke-linejoin="round"/></svg>
<div class="t" style="left:739px;top:873.42px;font-size:15px;color:#43465a;font-family:'Liberation Sans';font-weight:normal;font-style:normal;letter-spacing:-0.178px;text-decoration:line-through;">Cursor Tab (Ignored)</div>
<svg style="position:absolute;left:897px;top:871px" width="12" height="19" viewBox="0 0 12 19"><circle cx="6" cy="9.5" r="3.5" fill="none" stroke="#565967" stroke-width="1.5"/><path d="M6 1 V6 M6 13 V18" stroke="#565967" stroke-width="1.5"/></svg>
<div class="t" style="left:916px;top:873.42px;font-size:15px;color:#565967;font-family:'Liberation Sans';font-weight:normal;font-style:normal;letter-spacing:-0.325px;">shashankns60 (3 weeks ago)</div>
<div class="t" style="left:1123.5px;top:873.42px;font-size:15px;color:#565967;font-family:'Liberation Sans';font-weight:normal;font-style:normal;letter-spacing:-0.336px;">Ln 38, Col 26</div>
<div class="t" style="left:1228px;top:873.42px;font-size:15px;color:#565967;font-family:'Liberation Sans';font-weight:normal;font-style:normal;letter-spacing:-0.601px;">Spaces: 4</div>
<div class="t" style="left:1309.5px;top:873.42px;font-size:15px;color:#565967;font-family:'Liberation Sans';font-weight:normal;font-style:normal;letter-spacing:-0.674px;">UTF-8</div>
<div class="t" style="left:1369.5px;top:873.42px;font-size:15px;color:#565967;font-family:'Liberation Sans';font-weight:normal;font-style:normal;">LF</div>
<div class="t" style="left:1402.5px;top:873.42px;font-size:15px;color:#565967;font-family:'Liberation Sans';font-weight:normal;font-style:normal;">{ }</div>
<div class="t" style="left:1425.5px;top:873.42px;font-size:15px;color:#565967;font-family:'Liberation Sans';font-weight:normal;font-style:normal;">Shell Script</div>
</div>
</body></html>
